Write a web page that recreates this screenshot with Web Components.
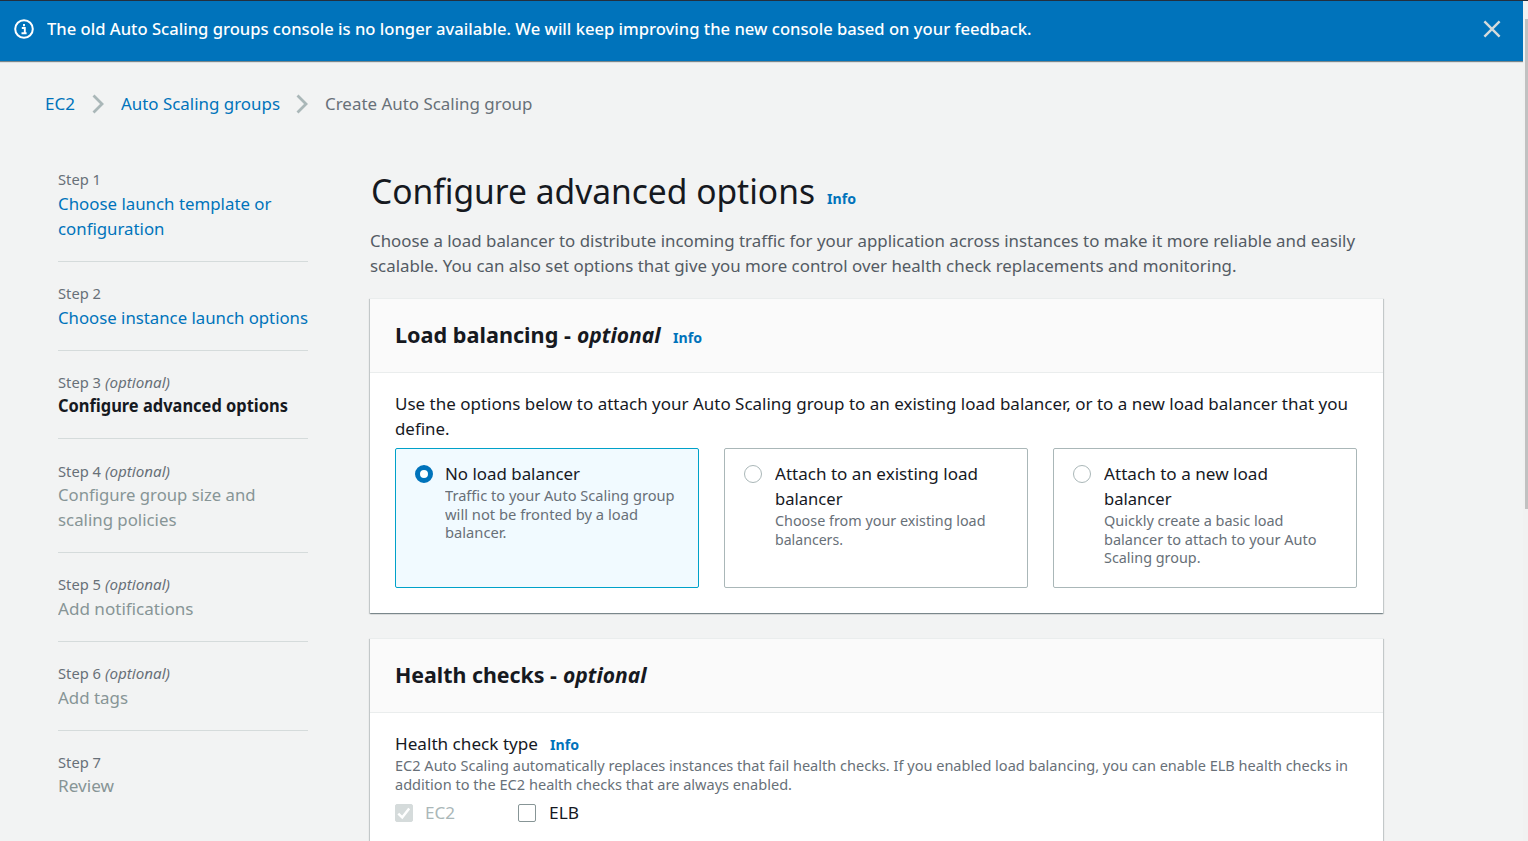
<!DOCTYPE html>
<html lang="en">
<head>
<meta charset="utf-8">
<title>Create Auto Scaling group</title>
<style>
html,body{margin:0;height:100%;overflow:hidden}
body{font-family:"Noto Sans","Open Sans",sans-serif;font-size:17px;color:#16191f;background:#f2f3f3}
</style>
</head>
<body>
<console-page></console-page>
<script>
const define = (name, css, html, setup) => customElements.define(name, class extends HTMLElement {
  connectedCallback() {
    if (this.shadowRoot) return;
    const root = this.attachShadow({mode: 'open'});
    root.innerHTML = `<style>*{box-sizing:border-box}${css}</style>${typeof html === 'function' ? html(this) : html}`;
    if (setup) setup(this, root);
  }
});

/* One line of text, condensed or widened to the measure given in "w". */
define('fit-text', `
:host{display:inline-block;white-space:pre;vertical-align:baseline}
:host([line]){display:block}
span{display:inline-block;transform-origin:0 50%}`,
'<span><slot></slot></span>', (el, root) => {
  const span = root.querySelector('span'), w = +el.getAttribute('w');
  const natural = span.getBoundingClientRect().width;
  span.style.transform = `scaleX(${w / natural})`;
  el.style.width = w + 'px';
});

define('info-link', `
:host{display:inline-block;color:#0073bb;font-size:14.5px;font-weight:700;font-style:normal}`,
'<fit-text w="29">Info</fit-text>');

define('flash-banner', `
:host{display:flex;height:60px;background:#0073bb;color:#fff;font-weight:500;padding:15px 22px 0 14px;align-items:flex-start;box-shadow:0 1px 1px rgba(0,28,36,.5)}
.i{width:20px;height:20px;margin:3px 12.5px 0 0}
.x{width:18px;height:18px;margin:4px 0 0 auto}
.t{line-height:25px}`,
`<svg class="i" viewBox="0 0 20 20" fill="none"><circle cx="10" cy="10" r="8.8" stroke="#fff" stroke-width="2"/><path d="M10 5v2.2M7.8 9H10.8V14M7.5 14.2H12.6" stroke="#fff" stroke-width="1.9"/></svg>
<div class="t"><slot></slot></div>
<svg class="x" viewBox="0 0 18 18" fill="none" stroke="#d5dbdb" stroke-width="2.4"><path d="M1.4 1.4 16.6 16.6M16.6 1.4 1.4 16.6"/></svg>`);

define('crumb-trail', `
:host{display:flex;align-items:center;height:25px;line-height:25px;color:#687078}
.l{color:#0073bb}
svg{width:12px;height:20px;margin:1px 17px 0 16.5px}`,
() => {
  const chev = '<svg viewBox="0 0 12 20" fill="none" stroke="#aab7b8" stroke-width="2.8"><path d="M1.5 1.5 10 10 1.5 18.5"/></svg>';
  return `<fit-text class="l" w="30">EC2</fit-text>${chev}<fit-text class="l" w="159">Auto Scaling groups</fit-text>${chev}<fit-text w="207.5">Create Auto Scaling group</fit-text>`;
});

define('wizard-step', `
:host{display:block;width:250.5px;padding-bottom:20px;color:#879596}
:host(:not(:first-of-type)){border-top:1px solid #d5dbdb;padding-top:20.25px}
.n{font-size:14.5px;line-height:22px;height:22.5px;color:#687078;display:flex}
i{margin-left:4px}
.t{line-height:25px}
:host([kind=link]) .t{color:#0073bb}
:host([kind=current]) .t{color:#16191f;font-weight:700}`,
el => `<div class="n"><fit-text w="43">Step ${el.getAttribute('n')}</fit-text>${el.hasAttribute('optional') ? '<i><fit-text w="65">(optional)</fit-text></i>' : ''}</div><div class="t"><slot></slot></div>`);

define('console-panel', `
:host{display:block;background:#fff;border-top:1px solid #eaeded;box-shadow:0 1px 1px 0 rgba(0,28,36,.3),1px 1px 1px 0 rgba(0,28,36,.15),-1px 1px 1px 0 rgba(0,28,36,.15)}
header{height:73.5px;background:#fafafa;border-bottom:1px solid #eaeded;padding:19px 25px 0 25.25px;font-size:21.5px;font-weight:700;line-height:34px;white-space:nowrap}
.b{padding:18.5px 26px 25px 25.25px}`,
'<header><slot name="title"></slot></header><div class="b"><slot></slot></div>');

define('radio-tile', `
:host{display:flex;height:140px;border:1px solid #aab7b8;border-radius:2px;background:#fff;padding:12px 10px 0 19px}
:host([selected]){background:#f1faff;border-color:#00a1c9}
.r{width:18px;height:18px;margin:4px 12.75px 0 0;border:1px solid #aab7b8;border-radius:50%;background:#fff;flex:none}
:host([selected]) .r{border:5.5px solid #0073bb;margin-right:12.25px}
.t{line-height:25px}
.d{font-size:14.5px;line-height:18.6px;color:#687078}`,
'<div class="r"></div><div><div class="t"><slot name="title"></slot></div><div class="d"><slot></slot></div></div>');

define('check-field', `
:host{display:flex;align-items:flex-start;height:25px;line-height:24px}
.c{width:18px;height:18px;border:1px solid #879596;border-radius:2px;background:#fff;margin:3.5px 12.25px 0 0;flex:none}
svg{display:none}
:host([disabled]){color:#aab7b8}
:host([disabled]) .c{background:#d5dbdb;border-color:#d5dbdb}
:host([checked]) svg{display:block;width:16px;height:16px}`,
'<div class="c"><svg viewBox="0 0 16 16" fill="none" stroke="#fff" stroke-width="2.5"><path d="M2.3 8.7 6.2 12.4 13.2 3.4"/></svg></div><slot></slot>');

define('scroll-rail', `
:host{display:block;width:5px;background:#f1f1f1;padding:18px 0 0 2px}
div{height:490px;background:#c1c1c1}`, '<div></div>');

define('console-page', `
:host{display:flex;flex-direction:column;height:841px;width:1528px;overflow:hidden;border-top:1px solid #232f3e}
.row{display:flex;flex:1;min-height:0}
.view{flex:1;min-width:0;overflow:hidden}
crumb-trail{margin:30px 0 0 45px}
.cols{display:flex;padding:52.25px 0 0 57.5px}
nav{width:312.25px;flex:none}
main{width:1013.5px;margin-top:.5px}
h1{font-size:34px;font-weight:400;line-height:45px;margin:0;height:45px;white-space:nowrap}
h1 fit-text{margin-left:.75px}
h1 info-link{margin-left:12px}
.lead{color:#545b64;line-height:25px;margin:14px 0 20.5px}
console-panel+console-panel{margin-top:25px}
.tiles{display:grid;grid-template-columns:repeat(3,304px);gap:25px;margin-top:7px}
.hint{font-size:14.5px;line-height:18.75px;color:#687078;margin-top:-1.25px}
.p{line-height:25px}
.ft{line-height:25px;white-space:nowrap}
.ft info-link{margin-left:12px}
.checks{display:flex;gap:63px;margin-top:7px}
[slot=title] info-link{margin-left:12.5px}`,
`<div class="row"><div class="view">
<flash-banner><fit-text w="984.5">The old Auto Scaling groups console is no longer available. We will keep improving the new console based on your feedback.</fit-text></flash-banner>
<crumb-trail></crumb-trail>
<div class="cols">
<nav>
<wizard-step n="1" kind="link"><fit-text line w="213.5">Choose launch template or</fit-text><fit-text line w="106.5">configuration</fit-text></wizard-step>
<wizard-step n="2" kind="link"><fit-text line w="250">Choose instance launch options</fit-text></wizard-step>
<wizard-step n="3" optional kind="current"><fit-text line w="230">Configure advanced options</fit-text></wizard-step>
<wizard-step n="4" optional><fit-text line w="197.5">Configure group size and</fit-text><fit-text line w="118.5">scaling policies</fit-text></wizard-step>
<wizard-step n="5" optional><fit-text line w="135.5">Add notifications</fit-text></wizard-step>
<wizard-step n="6" optional><fit-text line w="70">Add tags</fit-text></wizard-step>
<wizard-step n="7"><fit-text line w="56">Review</fit-text></wizard-step>
</nav>
<main>
<h1><fit-text w="444">Configure advanced options</fit-text><info-link></info-link></h1>
<div class="lead"><fit-text line w="985">Choose a load balancer to distribute incoming traffic for your application across instances to make it more reliable and easily</fit-text><fit-text line w="866.5">scalable. You can also set options that give you more control over health check replacements and monitoring.</fit-text></div>
<console-panel>
<div slot="title"><fit-text w="181.5">Load balancing - </fit-text><i><fit-text w="83.5">optional</fit-text></i><info-link></info-link></div>
<div class="p"><fit-text line w="953">Use the options below to attach your Auto Scaling group to an existing load balancer, or to a new load balancer that you</fit-text><fit-text line w="54.5">define.</fit-text></div>
<div class="tiles">
<radio-tile selected><fit-text slot="title" line w="135">No load balancer</fit-text><fit-text line w="229.5">Traffic to your Auto Scaling group</fit-text><fit-text line w="193">will not be fronted by a load</fit-text><fit-text line w="61.5">balancer.</fit-text></radio-tile>
<radio-tile><fit-text slot="title" line w="203">Attach to an existing load</fit-text><fit-text slot="title" line w="67.5">balancer</fit-text><fit-text line w="210.5">Choose from your existing load</fit-text><fit-text line w="68">balancers.</fit-text></radio-tile>
<radio-tile><fit-text slot="title" line w="164">Attach to a new load</fit-text><fit-text slot="title" line w="67.5">balancer</fit-text><fit-text line w="179.5">Quickly create a basic load</fit-text><fit-text line w="212.5">balancer to attach to your Auto</fit-text><fit-text line w="96.5">Scaling group.</fit-text></radio-tile>
</div>
</console-panel>
<console-panel>
<div slot="title"><fit-text w="167.5">Health checks - </fit-text><i><fit-text w="83.5">optional</fit-text></i></div>
<div class="ft"><fit-text w="143">Health check type</fit-text><info-link></info-link></div>
<div class="hint"><fit-text line w="953">EC2 Auto Scaling automatically replaces instances that fail health checks. If you enabled load balancing, you can enable ELB health checks in</fit-text><fit-text line w="397">addition to the EC2 health checks that are always enabled.</fit-text></div>
<div class="checks"><check-field checked disabled><fit-text w="30">EC2</fit-text></check-field><check-field><fit-text w="30">ELB</fit-text></check-field></div>
</console-panel>
</main>
</div>
</div><scroll-rail></scroll-rail></div>`);
</script>
</body>
</html>
